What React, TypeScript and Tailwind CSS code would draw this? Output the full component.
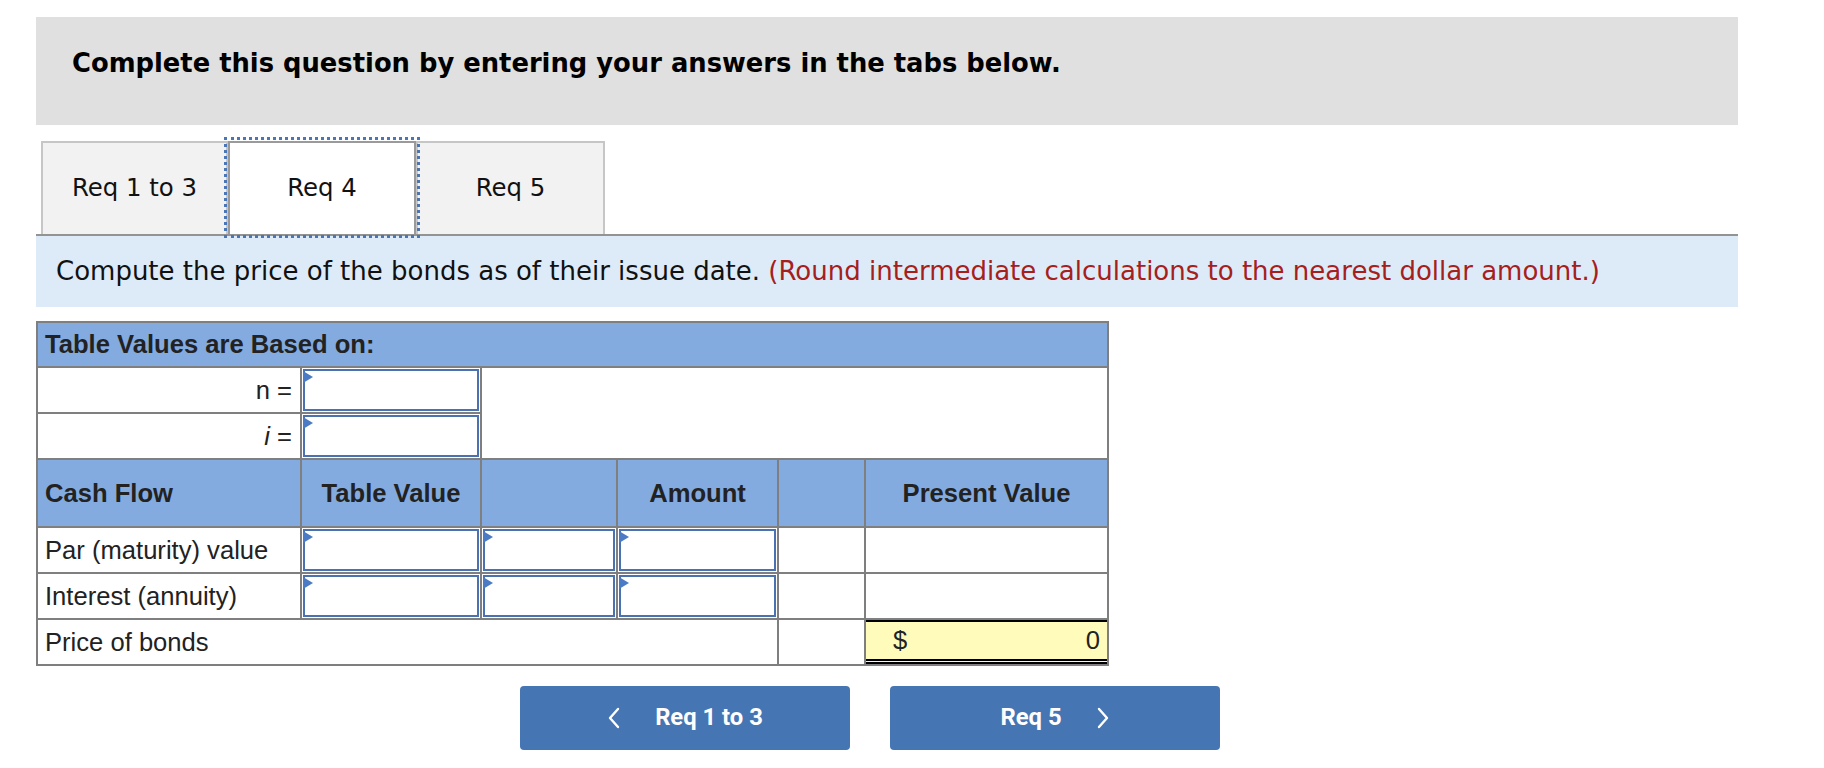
import React from "react";

const verdana = { fontFamily: '"DejaVu Sans", Verdana, sans-serif' };
const arial = { fontFamily: '"Liberation Sans", Arial, sans-serif' };

function InputBox() {
  return (
    <div className="relative h-[42px] mx-[1px] border-2 border-[#4a72b0] bg-white">
      <div className="absolute -left-[2px] top-0 w-0 h-0 border-y-[6px] border-y-transparent border-l-[10px] border-l-[#4a7bc4]" />
    </div>
  );
}

function Chevron({ dir }: { dir: "left" | "right" }) {
  return (
    <svg width="14" height="22" viewBox="0 0 14 22" fill="none">
      <path
        d={dir === "left" ? "M11 2 L3 11 L11 20" : "M3 2 L11 11 L3 20"}
        stroke="white"
        strokeWidth="2.4"
        strokeLinecap="round"
        strokeLinejoin="round"
      />
    </svg>
  );
}

export default function App() {
  const cell = "border-2 border-[#7f7f7f]";
  return (
    <div className="min-h-[768px] bg-white pt-[17px] pl-[36px]">
      <div className="w-[1702px]">
        {/* question banner */}
        <div className="h-[108px] bg-[#e0e0e0] pl-[36px] pt-[31px]">
          <h1 className="text-[25.8px] leading-[30px] font-bold text-black" style={verdana}>
            Complete this question by entering your answers in the tabs below.
          </h1>
        </div>

        {/* tabs */}
        <div className="mt-[16px] flex items-end pl-[5px] border-b-2 border-[#939393]" style={verdana}>
          <div className="w-[187px] h-[93px] flex items-center justify-center bg-[#f2f2f2] border-2 border-b-0 border-[#c6c6c6] text-[24.4px] text-[#111]">
            Req 1 to 3
          </div>
          <div className="w-[188px] h-[93px] flex items-center justify-center bg-white border-2 border-b-0 border-[#9a9a9a] outline-dotted outline-3 outline-[#4a76b8] outline-offset-1 text-[24.4px] text-[#111] relative z-10">
            Req 4
          </div>
          <div className="w-[189px] h-[93px] flex items-center justify-center bg-[#f2f2f2] border-2 border-b-0 border-[#c6c6c6] text-[24.4px] text-[#111]">
            Req 5
          </div>
        </div>

        {/* instructions */}
        <div className="h-[71px] bg-[#ddebf8] pl-[20px] flex items-center text-[26px] text-[#111]" style={verdana}>
          <p>
            Compute the price of the bonds as of their issue date.{" "}
            <span className="text-[#a5201c]">(Round intermediate calculations to the nearest dollar amount.)</span>
          </p>
        </div>

        {/* worksheet */}
        <table
          className="mt-[14px] w-[1071px] table-fixed border-collapse border-2 border-[#7f7f7f] text-[25.6px] text-[#222]"
          style={arial}
        >
          <colgroup>
            <col className="w-[264px]" />
            <col className="w-[180px]" />
            <col className="w-[136px]" />
            <col className="w-[161px]" />
            <col className="w-[87px]" />
            <col className="w-[243px]" />
          </colgroup>
          <tbody>
            <tr className="h-[45px] bg-[#83abe0]">
              <td colSpan={6} className={`${cell} px-[7px] font-bold`}>
                Table Values are Based on:
              </td>
            </tr>
            <tr className="h-[46px]">
              <td className={`${cell} text-right pr-[8px]`}>n =</td>
              <td className={`${cell} p-0`}>
                <InputBox />
              </td>
              <td colSpan={4} rowSpan={2} className={cell} />
            </tr>
            <tr className="h-[46px]">
              <td className={`${cell} text-right pr-[8px]`}>
                <i>i</i> =
              </td>
              <td className={`${cell} p-0`}>
                <InputBox />
              </td>
            </tr>
            <tr className="h-[68px] bg-[#83abe0] font-bold">
              <td className={`${cell} px-[7px]`}>Cash Flow</td>
              <td className={`${cell} text-center`}>Table Value</td>
              <td className={cell} />
              <td className={`${cell} text-center`}>Amount</td>
              <td className={cell} />
              <td className={`${cell} text-center`}>Present Value</td>
            </tr>
            {["Par (maturity) value", "Interest (annuity)"].map((label) => (
              <tr key={label} className="h-[46px]">
                <td className={`${cell} px-[7px] whitespace-nowrap`}>{label}</td>
                <td className={`${cell} p-0`}>
                  <InputBox />
                </td>
                <td className={`${cell} p-0`}>
                  <InputBox />
                </td>
                <td className={`${cell} p-0`}>
                  <InputBox />
                </td>
                <td className={cell} />
                <td className={cell} />
              </tr>
            ))}
            <tr className="h-[46px]">
              <td colSpan={4} className={`${cell} px-[7px]`}>
                Price of bonds
              </td>
              <td className={cell} />
              <td className={`${cell} p-0`}>
                <div className="h-[44px] bg-[#fffbbb] border-t-2 border-b-[5px] border-double border-t-solid border-black flex items-center justify-between pl-[27px] pr-[7px]">
                  <span>$</span>
                  <span>0</span>
                </div>
              </td>
            </tr>
          </tbody>
        </table>

        {/* navigation */}
        <div className="mt-[20px] ml-[484px] flex gap-[40px]" style={{ fontFamily: "Roboto, sans-serif" }}>
          <button className="w-[330px] h-[64px] rounded-[4px] bg-[#4675b3] text-white text-[23.8px] font-bold flex items-center justify-center gap-[34px]">
            <Chevron dir="left" />
            <span>Req 1 to 3</span>
          </button>
          <button className="w-[330px] h-[64px] rounded-[4px] bg-[#4675b3] text-white text-[23.8px] font-bold flex items-center justify-center gap-[34px]">
            <span>Req 5</span>
            <Chevron dir="right" />
          </button>
        </div>
      </div>
    </div>
  );
}
